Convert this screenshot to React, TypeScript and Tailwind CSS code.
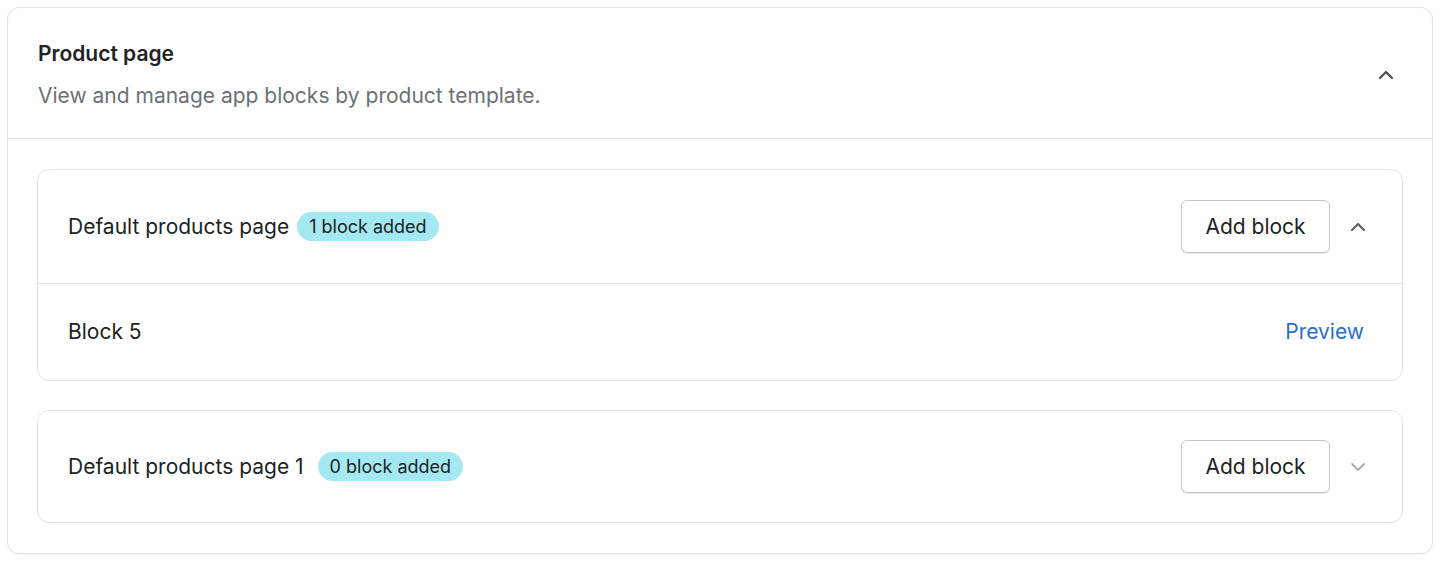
import React from "react";

const ChevronUp = ({ className = "" }: { className?: string }) => (
  <svg viewBox="0 0 20 20" className={className} fill="none">
    <path d="M4 13l6-6 6 6" stroke="currentColor" strokeWidth="2.2" strokeLinecap="round" strokeLinejoin="round" />
  </svg>
);

const ChevronDown = ({ className = "" }: { className?: string }) => (
  <svg viewBox="0 0 20 20" className={className} fill="none">
    <path d="M4 7l6 6 6-6" stroke="currentColor" strokeWidth="1.8" strokeLinecap="round" strokeLinejoin="round" />
  </svg>
);

function Badge({ children }: { children: React.ReactNode }) {
  return (
    <span className="inline-flex h-[29px] items-center rounded-full bg-[#a4e8f2] px-[12px] text-[18px] leading-none text-[#202223]">
      {children}
    </span>
  );
}

function AddButton() {
  return (
    <button className="h-[53px] w-[149px] rounded-[6px] border border-[#c4c7ca] bg-white text-[21px] text-[#202223] shadow-[0_1px_0_rgba(0,0,0,0.08)]">
      Add block
    </button>
  );
}

export default function App() {
  return (
    <div className="min-h-[561px] bg-white p-[7px]" style={{ fontFamily: "Inter, 'Noto Sans', sans-serif" }}>
      <div className="w-[1426px] rounded-[12px] border border-[#e4e5e7] bg-white shadow-[0_1px_2px_rgba(0,0,0,0.06)]">
        <div className="flex items-center justify-between border-b border-[#e1e3e5] pb-[28px] pl-[30px] pr-[36px] pt-[32px]">
          <div className="flex flex-col gap-[14px]">
            <div className="text-[21px] font-semibold leading-[28px] text-[#202223]">Product page</div>
            <div className="text-[21px] leading-[28px] text-[#6d7175]">View and manage app blocks by product template.</div>
          </div>
          <ChevronUp className="h-[20px] w-[20px] text-[#4a4d50]" />
        </div>
        <div className="flex flex-col gap-[29px] px-[29px] pb-[30px] pt-[30px]">
          <div className="rounded-[12px] border border-[#e1e3e5] bg-white">
            <div className="flex h-[114px] items-center justify-between border-b border-[#e1e3e5] pl-[30px] pr-[34px]">
              <div className="flex items-center gap-[8px]">
                <span className="text-[21px] text-[#202223]">Default products page</span>
                <Badge>1 block added</Badge>
              </div>
              <div className="flex items-center gap-[18px]">
                <AddButton />
                <ChevronUp className="h-[20px] w-[20px] text-[#5c5f62]" />
              </div>
            </div>
            <div className="flex h-[96px] items-center justify-between pl-[30px] pr-[38px]">
              <span className="text-[21px] text-[#202223]">Block 5</span>
              <span className="text-[21px] text-[#2c6ecb]">Preview</span>
            </div>
          </div>
          <div className="rounded-[12px] border border-[#e1e3e5] bg-white">
            <div className="flex h-[111px] items-center justify-between pl-[30px] pr-[34px]">
              <div className="flex items-center gap-[14px]">
                <span className="text-[21px] text-[#202223]">Default products page 1</span>
                <Badge>0 block added</Badge>
              </div>
              <div className="flex items-center gap-[18px]">
                <AddButton />
                <ChevronDown className="h-[20px] w-[20px] text-[#a6aaae]" />
              </div>
            </div>
          </div>
        </div>
      </div>
    </div>
  );
}
